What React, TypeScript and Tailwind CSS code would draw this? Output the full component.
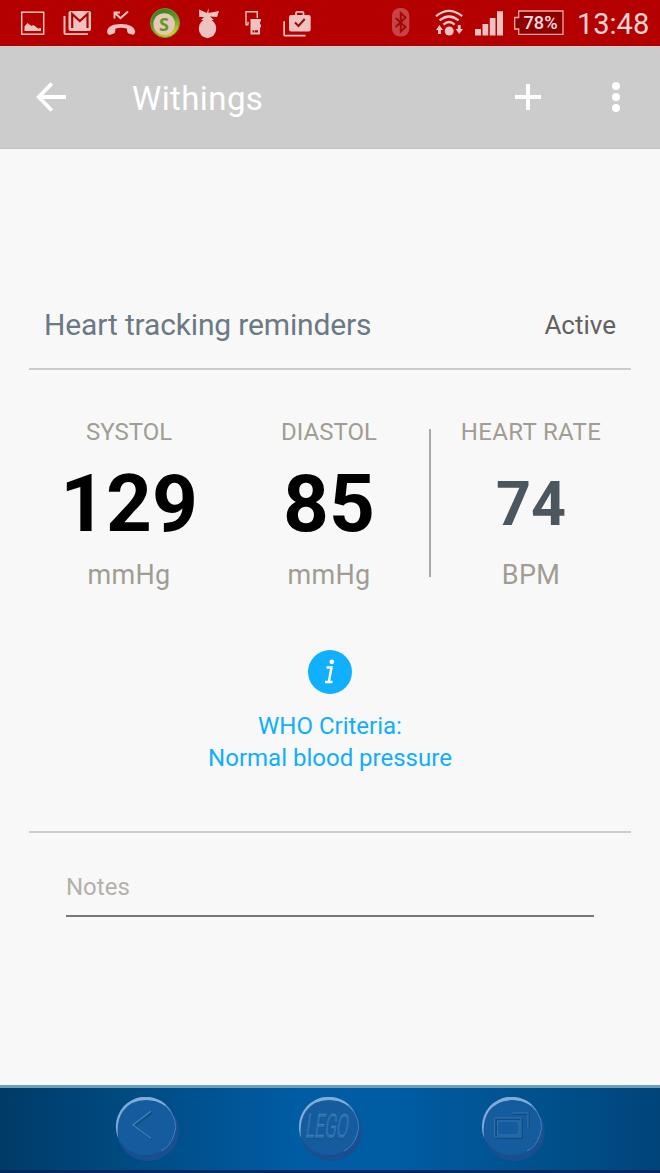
import React from 'react';

const metrics = [
  { label: 'SYSTOL', value: '129', unit: 'mmHg', labelClass: '', valueClass: 'text-[80px] text-black' },
  { label: 'DIASTOL', value: '85', unit: 'mmHg', labelClass: '', valueClass: 'text-[80px] text-black' },
  { label: 'HEART RATE', value: '74', unit: 'BPM', labelClass: 'tracking-[0.35px]', valueClass: 'text-[61px] text-[#4c565e]' },
];

const StatusIcons = () => (
  <svg width="330" height="46" viewBox="0 0 330 46" fill="#efc2c2">
    {/* Picture */}
    <rect x="21.7" y="12.2" width="22" height="22" fill="none" stroke="#efc2c2" strokeWidth="1.5" />
    <path d="M24.5 31V26.5L27.5 23L31.5 26L33.5 25L38 28.5L41 28V31Z" />

    {/* Gmail stack */}
    <path d="M63.5 16H65.5V33.2H88V35H65.5Q63.5 35 63.5 33Z" />
    <rect x="68.5" y="11" width="22.5" height="20" rx="2" />
    <path d="M72.2 28V14L79.8 21L87.5 14V28" fill="none" stroke="#b50000" strokeWidth="2.2" />

    {/* Missed call */}
    <path d="M114.5 18.5V12.5H120M115 13L120.5 18.2L128 11.5" fill="none" stroke="#efc2c2" strokeWidth="2" />
    <path d="M107 31.5Q108 24 121 24Q134 24 135.3 31.5Q135 34 133 34.7L128.5 33.5Q127 33 127 28.7Q121 27 115.3 28.7Q115.5 33 114 33.5L109.5 35Q107 34 107 31.5Z" />

    {/* Green coin */}
    <defs>
      <linearGradient id="coin" x1="0" y1="0" x2="0.4" y2="1">
        <stop offset="0" stopColor="#2c751c" />
        <stop offset="0.55" stopColor="#5a9a20" />
        <stop offset="1" stopColor="#c5d21d" />
      </linearGradient>
    </defs>
    <circle cx="165" cy="23" r="14.5" fill="url(#coin)" stroke="#699544" strokeWidth="1" />
    <circle cx="164.2" cy="24" r="10.8" fill="#e9c6ba" />
    <text x="164" y="30.7" textAnchor="middle" fontFamily="Open Sans, sans-serif" fontSize="18" fontWeight="700" fill="#579b28">S</text>

    {/* Fruit */}
    <ellipse cx="207.5" cy="28.5" rx="8.7" ry="9.7" />
    <path d="M199 9.5L207 13L208.5 8V13L219 11L217 17L210 16.5L214 20H201L204 17H199.3Z" />

    {/* Device and card */}
    <path d="M248.5 24.8H246V11.8H257.3V18M248 24V21.8" fill="none" stroke="#efc2c2" strokeWidth="1.4" />
    <path d="M250.5 19H261V21L260 22V24L261 25V27L260 28V34.5H250.5Z" />
    <path d="M252.5 30.3H254.4V32.5H252.5ZM255 30.3H258V32.5H255Z" fill="#b50000" />

    {/* Briefcase with check */}
    <path d="M283.3 21.2H285V34.8H305.5V36.5H285Q283.3 36.5 283.3 35Z" />
    <rect x="289" y="15" width="21.7" height="16.5" rx="2" />
    <path d="M296 15V13.2Q296 11.8 297.5 11.8H302Q303.5 11.8 303.5 13.2V15" fill="none" stroke="#efc2c2" strokeWidth="1.8" />
    <path d="M295 22.5L298.5 26L304.7 19" fill="none" stroke="#9c0a0a" strokeWidth="2" />
  </svg>
);

const SignalIcons = () => (
  <svg width="186" height="46" viewBox="384 0 186 46" fill="#efc2c2">
    {/* Bluetooth */}
    <rect x="392" y="8" width="17.3" height="28.5" rx="8" fill="#c64444" />
    <path d="M395.7 18L405.5 27L400.8 31.5V13L405.5 17.5L395.7 27" fill="none" stroke="#a50808" strokeWidth="2" />

    {/* Wifi */}
    <g fill="none" stroke="#f1caca" strokeWidth="2.3">
      <path d="M436 16.2Q449 5.5 462.2 16.2" />
      <path d="M439.6 20.4Q449 12.5 458.6 20.4" />
      <path d="M443.5 24.6Q449 19.5 454.6 24.6" />
    </g>
    <circle cx="449.2" cy="31" r="4.5" />
    <path d="M439.4 25L443 30H440.9V34H438V30H436ZM457.8 25H460.7V29H463L459.2 34L455.6 29H457.8Z" />

    {/* Signal */}
    <path d="M475 29H481V35.5H475ZM482.5 24H488.2V35.5H482.5ZM489.8 18H495.5V35.5H489.8ZM497 11.2H503V35.5H497Z" />

    {/* Battery */}
    <path d="M518.7 11H563V34.3H518.7V29H514.7V17.5H518.7Z" fill="#8e0000" stroke="#efa9a9" strokeWidth="1.3" />
    <text x="523.5" y="29" textLength="34" lengthAdjust="spacingAndGlyphs" fontFamily="Roboto, sans-serif" fontSize="18.5" fontWeight="500" fill="#f8dede">78%</text>
  </svg>
);

const NavStud = ({ children }: { children: React.ReactNode }) => (
  <svg width="68" height="70" viewBox="0 0 68 70">
    <ellipse cx="33" cy="34" rx="31" ry="30" fill="#184f91" />
    <ellipse cx="30.5" cy="29" rx="30" ry="29" fill="#155c9f" />
    <path d="M2 38Q-2 22 9 9Q24 -5 42 2Q51 5 57 16Q48 4 34 3.2Q17 2 8 14Q1 24 3 41Z" fill="#80acd9" />
    <path d="M50 8Q65 23 59 38Q55 50 46 54" fill="none" stroke="#4280be" strokeWidth="1" />
    <g fill="none" strokeLinecap="round" strokeLinejoin="round">{children}</g>
  </svg>
);

const Header = () => (
  <header className="h-[103px] bg-[#cccccc] border-b border-[#c3c3c3] flex items-center text-white">
    <svg width="32" height="32" viewBox="0 0 32 32" className="ml-[36px]">
      <path d="M30 16H3M15.8 2.5L2.8 16L15.8 29.5" fill="none" stroke="white" strokeWidth="3.8" />
    </svg>
    <h1 className="ml-[64px] mt-[3px] text-[33px] leading-none tracking-[0.4px]">Withings</h1>
    <svg width="26" height="26" viewBox="0 0 26 26" className="ml-auto">
      <path d="M13 0V26M0 13H26" stroke="white" strokeWidth="4" />
    </svg>
    <svg width="8" height="30" viewBox="0 0 8 30" className="ml-[71px] mr-[40px]" fill="white">
      <circle cx="4" cy="4" r="4" />
      <circle cx="4" cy="15" r="4" />
      <circle cx="4" cy="26" r="4" />
    </svg>
  </header>
);

export default function App() {
  return (
    <div className="w-[660px] h-[1173px] flex flex-col overflow-hidden bg-[#f8f8f8] font-[Roboto,sans-serif] whitespace-nowrap">
      <div className="h-[46px] shrink-0 bg-[#b50000] flex justify-between">
        <StatusIcons />
        <div className="flex items-center">
          <SignalIcons />
          <span className="w-[83px] mt-[2px] ml-[7px] text-[29px] leading-none text-[#f5d5d5]">13:48</span>
        </div>
      </div>

      <Header />

      <main className="h-[936px] shrink-0 pt-[141px]">
        <div className="mx-[29px] h-[80px] px-[15px] pt-[18px] flex justify-between border-b-2 border-[#c9cdcf]">
          <h2 className="text-[30px] leading-[34px] tracking-[-0.15px] text-[#6b7985]">Heart tracking reminders</h2>
          <span className="text-[26px] leading-[34px] text-[#62615f]">Active</span>
        </div>

        {/* Readings */}
        <div className="pt-[59px] pl-[29px] flex">
          {metrics.map((m, idx) => (
            <React.Fragment key={m.label}>
              {idx === 2 && <div className="w-[2px] h-[148px] bg-[#a9aaa7]" />}
              <div className="w-[200px] h-[160px] flex flex-col items-center text-[#a19d95]">
                <span className={`h-[28px] -mt-[11px] text-[24px] leading-[28px] ${m.labelClass}`}>{m.label}</span>
                <span className={`h-[116px] leading-[116px] font-bold ${m.valueClass}`}>{m.value}</span>
                <span className="h-[32px] -mt-[3px] text-[27px] leading-[32px] tracking-[0.3px]">{m.unit}</span>
              </div>
            </React.Fragment>
          ))}
        </div>

        {/* Result */}
        <div className="mx-[29px] mt-[61px] h-[183px] flex flex-col items-center text-center border-b-2 border-[#c9cdcf]">
          <svg width="44" height="44" viewBox="0 0 44 44">
            <circle cx="22" cy="22" r="22" fill="#10b0ff" />
            <circle cx="23.8" cy="11.8" r="2.4" fill="white" />
            <path d="M18.5 17.5H23.5L20.8 32M17 32H24.5" fill="none" stroke="white" strokeWidth="2.4" />
          </svg>
          <p className="mt-[16px] text-[24px] leading-[32px] text-[#10aeff]">
            WHO Criteria:<br />Normal blood pressure
          </p>
        </div>

        <div className="mx-[66px] mt-[38px] h-[46px] border-b-2 border-[#77787a] text-[24px] leading-[32px] text-[#b4b0aa]">
          Notes
        </div>
      </main>

      <nav className="h-[88px] shrink-0 border-t-[3px] border-t-[#6c9dbe] border-b-[3px] border-b-[#00285f] bg-[linear-gradient(90deg,#003b67_0%,#004b83_20%,#005ca3_45%,#005ca3_60%,#004c83_90%,#00447a_100%)] pl-[115px] pr-[111px] pt-[9px] flex justify-between">
        <NavStud>
          <path d="M36.5 16L19.5 29L36.5 42" stroke="#134c80" strokeWidth="2" />
          <path d="M35.5 14.5L18 28L35.5 41" stroke="#3a83bd" strokeWidth="1.3" />
        </NavStud>
        <NavStud>
          <g transform="translate(7 40) skewX(-8) scale(0.54 1)" fontFamily="Roboto, sans-serif" fontSize="32" fontWeight="300">
            <text x="1.5" y="0.8" stroke="#134f88" strokeWidth="0.8">LEGO</text>
            <text stroke="#3a83bd" strokeWidth="1">LEGO</text>
          </g>
        </NavStud>
        <NavStud>
          <path d="M15 22H41V41H15ZM33 17H48V30" stroke="#134c80" strokeWidth="2" />
          <path d="M14 21H40V40H14ZM32 16H47V30M17 24H38V38H17Z" stroke="#2f77b3" strokeWidth="1" />
        </NavStud>
      </nav>
    </div>
  );
}
